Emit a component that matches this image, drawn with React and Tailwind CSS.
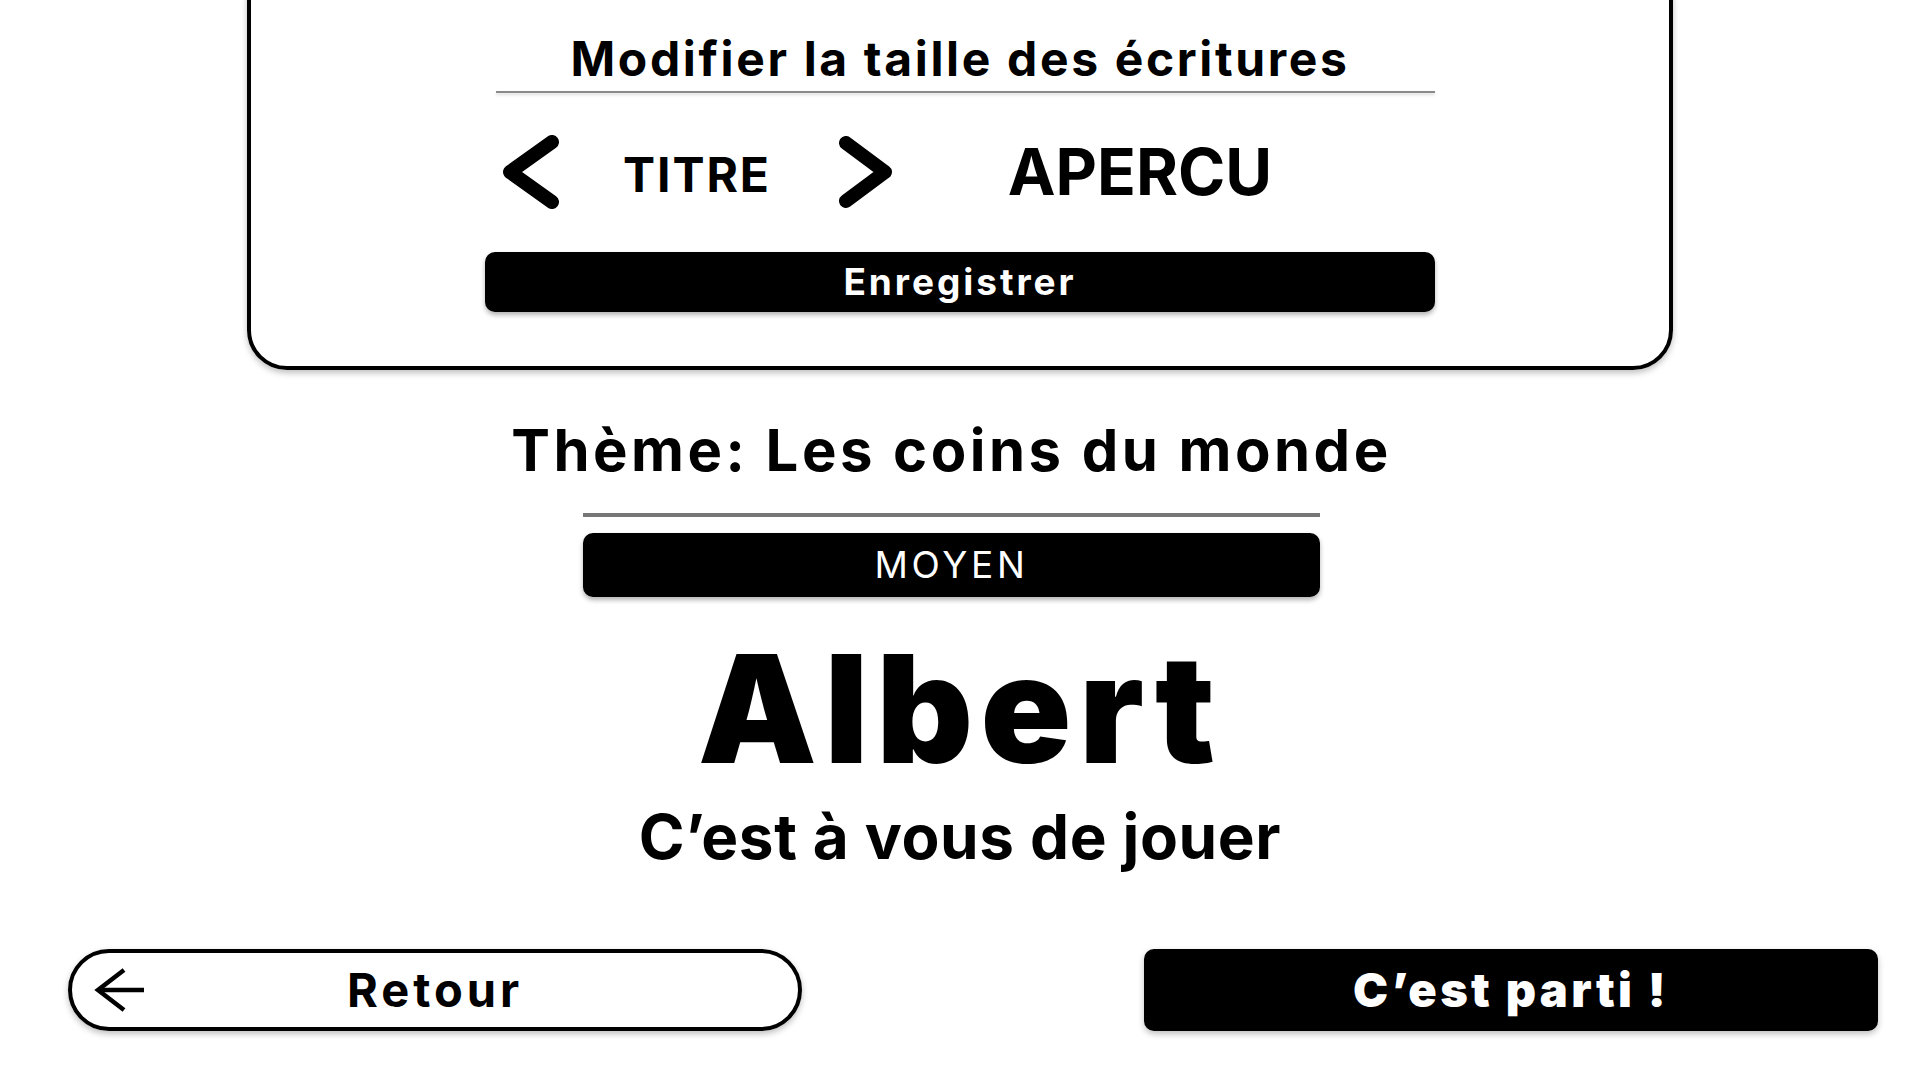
import React from "react";

const font = { fontFamily: "Inter, 'Open Sans', sans-serif" };

function ChevronLeft() {
  return (
    <svg width="58" height="76" viewBox="0 0 58 76" fill="none">
      <polyline points="50,8 8,38 50,68" stroke="black" strokeWidth="14" strokeLinecap="round" strokeLinejoin="round" />
    </svg>
  );
}

function ChevronRight() {
  return (
    <svg width="55" height="74" viewBox="0 0 55 74" fill="none">
      <polyline points="8,8 47,37 8,66" stroke="black" strokeWidth="14" strokeLinecap="round" strokeLinejoin="round" />
    </svg>
  );
}

function ArrowLeft() {
  return (
    <svg width="52" height="44" viewBox="0 0 52 44" fill="none">
      <path d="M51 22H5" stroke="black" strokeWidth="4.5" />
      <path d="M31 2L5 22L31 42" stroke="black" strokeWidth="4.5" strokeLinejoin="miter" />
    </svg>
  );
}

export default function App() {
  return (
    <div className="w-[1920px] h-[1080px] overflow-hidden bg-white flex flex-col text-black" style={font}>
      {/* Settings card */}
      <div className="-mt-[40px] ml-[247px] w-[1426px] h-[410px] border-4 border-black rounded-[40px] shadow-[0_3px_6px_rgba(0,0,0,0.25)] flex flex-col items-center pt-[71px] pb-[54px]">
        <div className="w-[950px] flex flex-col">
          <div className="h-[48px] leading-[48px] text-[48px] font-bold text-center tracking-[0.055em] whitespace-nowrap">
            Modifier la taille des écritures
          </div>
          <div className="mt-[8px] ml-[11px] w-[939px] h-[2px] bg-[#8a8a8a] shadow-[0_2px_3px_rgba(0,0,0,0.15)]" />
          <div className="mt-[39px] h-[80px] flex items-center">
            <div className="ml-[17px] w-[58px] h-[76px] flex items-center justify-center"><ChevronLeft /></div>
            <div className="ml-[37px] w-[200px] mt-[5px] text-center text-[48px] leading-[48px] font-bold tracking-[0.04em]">TITRE</div>
            <div className="ml-[41px] w-[55px] h-[74px] flex items-center justify-center"><ChevronRight /></div>
            <div className="ml-[107px] w-[280px] text-center text-[64px] leading-[64px] font-bold">APERCU</div>
          </div>
          <div className="mt-[40px] h-[60px] bg-black rounded-[10px] shadow-[0_3px_5px_rgba(0,0,0,0.3)] flex items-center justify-center text-white text-[37px] leading-[40px] font-bold tracking-[0.08em]">
            Enregistrer
          </div>
        </div>
      </div>

      {/* Theme */}
      <div className="ml-[583px] w-[737px] flex flex-col items-center">
        <div className="mt-[50px] h-[60px] leading-[60px] text-[58px] font-bold text-center whitespace-nowrap tracking-[0.06em]">
          Thème: Les coins du monde
        </div>
        <div className="mt-[33px] w-full h-[4px] bg-[#777777]" />
        <div className="mt-[16px] w-full h-[64px] bg-black rounded-[10px] shadow-[0_3px_5px_rgba(0,0,0,0.3)] flex items-center justify-center text-white text-[37px] leading-[40px] font-normal tracking-[0.1em]">
          MOYEN
        </div>
      </div>

      <div className="mt-[40px] h-[144px] leading-[144px] text-[150px] font-black text-center tracking-[0.05em]">
        Albert
      </div>
      <div className="mt-[25px] h-[62px] leading-[62px] text-[62px] font-bold text-center tracking-[0.01em]">
        C’est à vous de jouer
      </div>

      {/* Buttons */}
      <div className="mt-[81px] flex pl-[68px] gap-[342px]">
        <div className="w-[734px] h-[82px] border-4 border-black rounded-full shadow-[0_3px_6px_rgba(0,0,0,0.25)] flex items-center relative">
          <div className="absolute left-[21px] top-1/2 -translate-y-1/2"><ArrowLeft /></div>
          <div className="flex-1 text-center text-[47px] leading-[50px] font-bold tracking-[0.085em]">Retour</div>
        </div>
        <div className="w-[734px] h-[82px] bg-black rounded-[10px] shadow-[0_3px_6px_rgba(0,0,0,0.25)] flex items-center justify-center text-white text-[47px] leading-[50px] font-black tracking-[0.07em]">
          C’est parti !
        </div>
      </div>
    </div>
  );
}
